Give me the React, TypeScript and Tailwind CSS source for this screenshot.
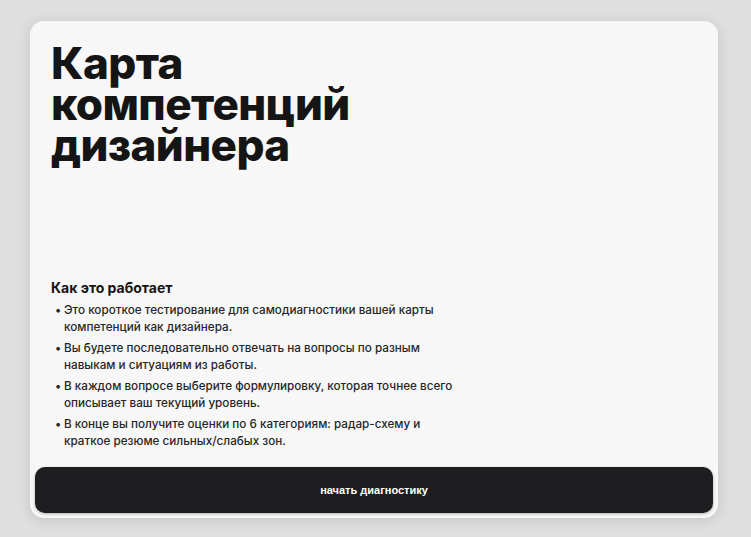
import React from "react";

const steps: Array<string> = [
    "Это короткое тестирование для самодиагностики вашей карты компетенций как дизайнера.",
    "Вы будете последовательно отвечать на вопросы по разным навыкам и ситуациям из работы.",
    "В каждом вопросе выберите формулировку, которая точнее всего описывает ваш текущий уровень.",
    "В конце вы получите оценки по 6 категориям: радар-схему и краткое резюме сильных/слабых зон.",
];

const App = () => {
    return (
        <div className="w-[751px] h-[537px] bg-[#dfdfdf] flex items-start justify-start pt-[21px] pl-[30px] font-['Inter',sans-serif]">
            <div className="w-[688px] h-[497px] bg-[#f7f7f7] rounded-[14px] shadow-[0_2px_14px_rgba(0,0,0,0.12)] flex flex-col">
                <div className="px-[21px] pt-[22px]">
                    <h1 className="text-[44px] leading-[41px] font-extrabold tracking-[-0.6px] text-[#151515]">
                        <span className="block">Карта</span>
                        <span className="block">компетенций</span>
                        <span className="block">дизайнера</span>
                    </h1>
                </div>

                <div className="flex-1" />

                <div className="px-[21px] pb-[17px]">
                    <h2 className="text-[14px] leading-[20px] font-bold text-[#151515] mb-[4px]">Как это работает</h2>
                    <ul className="flex flex-col gap-[4px] w-[402px]">
                        {steps.map((step) => {
                            return (
                                <li key={step} className="flex text-[11.7px] leading-[17px] font-medium text-[#262626]">
                                    <span className="w-[13px] shrink-0 pl-[4px]">•</span>
                                    <span>{step}</span>
                                </li>
                            );
                        })}
                    </ul>
                </div>

                <div className="px-[5px] pb-[5px]">
                    <button type="button" className="w-full h-[46px] rounded-[10px] bg-[#1e1e20] text-white text-[11px] font-bold font-['Liberation_Sans',sans-serif] shadow-[0_1px_3px_rgba(0,0,0,0.3)]">
                        начать диагностику
                    </button>
                </div>
            </div>
        </div>
    );
};

export default App;
